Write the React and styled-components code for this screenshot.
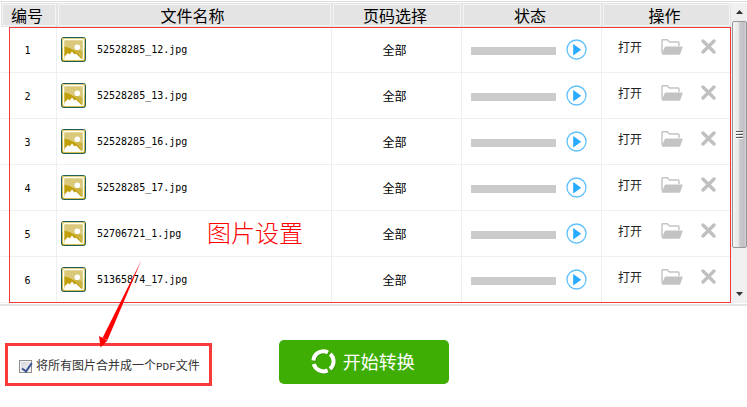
import { useState } from 'react';
import styled, { createGlobalStyle } from 'styled-components';

const GlobalStyle = createGlobalStyle`
    * {
        box-sizing: border-box;
    }

    body {
        margin: 0;
        background: #fff;
        color: #000;
        font-family: 'Noto Sans CJK SC', sans-serif;
        font-size: 12px;
    }

    button {
        padding: 0;
        border: none;
        background: none;
        color: inherit;
        font: inherit;
        cursor: pointer;
    }

    svg {
        display: block;
    }
`;

const Container = styled.div`
    padding-top: 1px;
`;

const ListPanel = styled.section`
    position: relative;
    display: flex;
    border-top: 1px solid #dcdcdc;
    border-bottom: 2px solid #e4e4e4;
    padding: 1px 0 1px 1px;
`;

const Table = styled.table`
    flex: 1;
    min-width: 0;
    table-layout: fixed;
    border-collapse: separate;
    border-spacing: 0;
`;

const Column = styled.col`
    width: ${(props) => props.$width};
`;

const HeadCell = styled.th`
    height: 24px;
    padding: 0;
    border: 1px solid #e4e4e4;
    background: #e4e4e4;
    box-shadow: inset 0 0 0 1px #f5f5f5;
    font-size: 16px;
    font-weight: 400;
    line-height: 20px;
    padding-right: 4px;
`;

const Cell = styled.td`
    height: 46px;
    padding: 0;
    border-right: ${(props) => (props.$last ? 'none' : '1px solid #efefef')};
    border-bottom: 1px solid #efefef;
    line-height: 16px;
    text-align: center;
`;

const Mono = styled.span`
    font-family: 'DejaVu Sans Mono', monospace;
    font-size: 10px;
`;

const Index = styled(Mono)`
    padding-right: 2px;
`;

const FileCell = styled.div`
    display: flex;
    align-items: center;
    gap: 11px;
    padding-left: 4px;
`;

const PageRange = styled.span`
    padding-right: 4px;
`;

const Status = styled.div`
    display: flex;
    align-items: center;
    gap: 10px;
    padding: 0 14px 0 9px;
`;

const Progress = styled.div`
    flex: 1;
    height: 8px;
    margin-top: 2px;
    background: #cbcbcb;
`;

const Actions = styled.div`
    display: flex;
    align-items: center;
    padding: 0 15px 6px 16px;
    color: #222;
`;

const FolderButton = styled.button`
    margin-left: 19px;
`;

const RemoveButton = styled.button`
    margin-left: auto;
`;

const ScrollBar = styled.div`
    display: flex;
    flex-direction: column;
    flex: none;
    width: 16px;
    padding-left: 1px;
    background: #f0f0f0;
`;

const ScrollButton = styled.button`
    display: flex;
    align-items: center;
    justify-content: center;
    height: 18px;
`;

const Track = styled.div`
    flex: 1;
`;

const Thumb = styled.div`
    display: flex;
    flex-direction: column;
    align-items: center;
    justify-content: center;
    height: 86%;
    border: 1px solid #979797;
    border-radius: 2px;
    background: linear-gradient(to right, #f5f5f5 0%, #e6e6e6 45%, #cdcdd0 50%, #c0c0c4 85%, #d6d6d6 100%);
    gap: 1px;
`;

const Grip = styled.i`
    width: 7px;
    height: 2px;
    border-top: 1px solid #555;
    border-bottom: 1px solid #fff;
`;

const Highlight = styled.div`
    position: absolute;
    inset: 25px 16px 1px 9px;
    border: 1px solid #f23c3c;
    pointer-events: none;
`;

const Note = styled.strong`
    position: absolute;
    left: 207px;
    top: 212px;
    color: #f00;
    font-size: 24px;
    font-weight: 300;
    line-height: 36px;
`;

const Arrow = styled.svg`
    position: absolute;
    left: 98px;
    top: 257px;
    pointer-events: none;
`;

const Footer = styled.footer`
    display: flex;
    align-items: flex-start;
    gap: 67px;
    padding: 34px 5px 20px;
`;

const MergeOption = styled.label`
    display: flex;
    align-items: center;
    gap: 4px;
    height: 43px;
    margin-top: 3px;
    padding: 3px 9px 0 11px;
    border: 3px solid #f93a3a;
    color: #333;
    line-height: 20px;
    white-space: nowrap;
`;

const Checkbox = styled.input`
    position: relative;
    appearance: none;
    width: 13px;
    height: 13px;
    margin: 0;
    border: 1px solid #8e8f8f;
    background: linear-gradient(135deg, #d0d4da, #f6f6f6);
    box-shadow: inset 0 0 0 1px #f4f4f4;

    &:checked::after {
        content: '';
        position: absolute;
        left: 4px;
        top: 0;
        width: 4px;
        height: 9px;
        border: solid #3f5694;
        border-width: 0 2px 2px 0;
        transform: rotate(35deg);
    }
`;

const Latin = styled.span`
    font-family: 'Liberation Mono', monospace;
    font-size: 11px;
`;

const ConvertButton = styled.button`
    display: flex;
    align-items: center;
    justify-content: center;
    gap: 7px;
    width: 170px;
    height: 44px;
    padding: 0 2px 2px 0;
    border-radius: 5px;
    background: #3fae04;
    color: #fff;
    font-size: 18px;
`;

const ImageIcon = () => (
    <svg width="25" height="25" viewBox="0 0 25 25" aria-hidden="true">
        <rect x="0.5" y="0.5" width="24" height="24" rx="2" fill="#c8a81e" stroke="#1d5f5c" />
        <path d="M1 1h23v10H1z" fill="#d6c263" />
        <rect x="2.5" y="2.5" width="20" height="20" rx="1.5" fill="#dac97b" stroke="#fffdf0" strokeWidth="1.4" />
        <path d="M3.5 9.5Q14 11.5 21.5 21.500H3.500z" fill="#c19f08" />
        <path d="M13 12.500L21.500 20.500V14z" fill="#cdb440" />
        <path d="M3.500 19.500L7 16 8.500 17.500 11 14.500 13.500 17.500 15 16.500 20 21.500 20 22H3.500z" fill="#fff" />
        <circle cx="16.3" cy="10.2" r="2.8" fill="#fff" />
    </svg>
);

const PlayIcon = () => (
    <svg width="21" height="21" viewBox="0 0 21 21" aria-hidden="true">
        <circle cx="10.5" cy="10.5" r="9.5" fill="#fff" stroke="#5fc0fb" strokeWidth="1.3" />
        <path d="M7.2 5v11.4l8-5.7z" fill="#27aaff" />
    </svg>
);

const FolderIcon = () => (
    <svg width="22" height="16" viewBox="0 0 22 16" aria-hidden="true">
        <path d="M1 14V1.5Q1 .8 1.8.8H6.3L8.5 3H17q1 0 1 1V7" fill="none" stroke="#c3c3c3" strokeWidth="1.4" />
        <path d="M5.2 7.5H21q1 0 .6 1L19.5 14.5q-.5 1.3-1.6 1.3H1.5q-1 0-.6-1L3.4 8.8q.5-1.3 1.8-1.3z" fill="#c3c3c3" />
    </svg>
);

const RemoveIcon = () => (
    <svg width="15" height="15" viewBox="0 0 15 15" aria-hidden="true">
        <path d="M2 2l11 11M13 2L2 13" stroke="#c0c0c0" strokeWidth="3.4" strokeLinecap="round" />
    </svg>
);

const ConvertIcon = () => (
    <svg width="25" height="25" viewBox="0 0 25 25" aria-hidden="true">
        <g fill="none" stroke="#2f7d08" strokeWidth="4" opacity="0.5" transform="translate(.8 .8)">
            <path d="M2.4 11.5A10 10 0 0 1 17 3.4" />
            <path d="M19.3 4.9A10 10 0 0 1 19 20" />
            <path d="M16.7 21.4A10 10 0 0 1 2.8 15" />
        </g>
        <g fill="none" stroke="#fff" strokeWidth="4">
            <path d="M2.4 11.5A10 10 0 0 1 17 3.4" />
            <path d="M19.3 4.9A10 10 0 0 1 19 20" />
            <path d="M16.7 21.4A10 10 0 0 1 2.8 15" />
        </g>
    </svg>
);

const files = [
    '52528285_12.jpg',
    '52528285_13.jpg',
    '52528285_16.jpg',
    '52528285_17.jpg',
    '52706721_1.jpg',
    '51365874_17.jpg',
];

const App = () => {
    const [merge, setMerge] = useState(true);

    return (
        <Container>
            <GlobalStyle />
            <ListPanel>
                <Table>
                    <colgroup>
                        <Column $width="56px" />
                        <Column $width="auto" />
                        <Column $width="130px" />
                        <Column $width="140px" />
                        <Column $width="129px" />
                    </colgroup>
                    <thead>
                        <tr>
                            <HeadCell>编号</HeadCell>
                            <HeadCell>文件名称</HeadCell>
                            <HeadCell>页码选择</HeadCell>
                            <HeadCell>状态</HeadCell>
                            <HeadCell>操作</HeadCell>
                        </tr>
                    </thead>
                    <tbody>
                        {files.map((name, i) => (
                            <tr key={name}>
                                <Cell>
                                    <Index>{i + 1}</Index>
                                </Cell>
                                <Cell>
                                    <FileCell>
                                        <ImageIcon />
                                        <Mono>{name}</Mono>
                                    </FileCell>
                                </Cell>
                                <Cell>
                                    <PageRange>全部</PageRange>
                                </Cell>
                                <Cell>
                                    <Status>
                                        <Progress />
                                        <button type="button" aria-label="开始">
                                            <PlayIcon />
                                        </button>
                                    </Status>
                                </Cell>
                                <Cell $last>
                                    <Actions>
                                        <button type="button">打开</button>
                                        <FolderButton type="button" aria-label="文件夹">
                                            <FolderIcon />
                                        </FolderButton>
                                        <RemoveButton type="button" aria-label="删除">
                                            <RemoveIcon />
                                        </RemoveButton>
                                    </Actions>
                                </Cell>
                            </tr>
                        ))}
                    </tbody>
                </Table>
                <ScrollBar>
                    <ScrollButton type="button" aria-label="向上">
                        <svg width="7" height="4" viewBox="0 0 7 4">
                            <path d="M0 4L3.5 0 7 4z" fill="#333" />
                        </svg>
                    </ScrollButton>
                    <Track>
                        <Thumb>
                            <Grip />
                            <Grip />
                            <Grip />
                        </Thumb>
                    </Track>
                    <ScrollButton type="button" aria-label="向下">
                        <svg width="7" height="4" viewBox="0 0 7 4">
                            <path d="M0 0L3.5 4 7 0z" fill="#333" />
                        </svg>
                    </ScrollButton>
                </ScrollBar>
                <Highlight />
                <Note>图片设置</Note>
                <Arrow width="46" height="91" viewBox="0 0 46 91" aria-hidden="true">
                    <path d="M43.500 1L9.500 81 4.500 79z" fill="#f00" />
                    <path d="M1 77L9.500 81.500 2.500 88.500z" fill="#f00" />
                </Arrow>
            </ListPanel>
            <Footer>
                <MergeOption>
                    <Checkbox type="checkbox" checked={merge} onChange={(e) => setMerge(e.target.checked)} />
                    <span>
                        将所有图片合并成一个<Latin>PDF</Latin>文件
                    </span>
                </MergeOption>
                <ConvertButton type="button">
                    <ConvertIcon />
                    开始转换
                </ConvertButton>
            </Footer>
        </Container>
    );
};

export default App;
